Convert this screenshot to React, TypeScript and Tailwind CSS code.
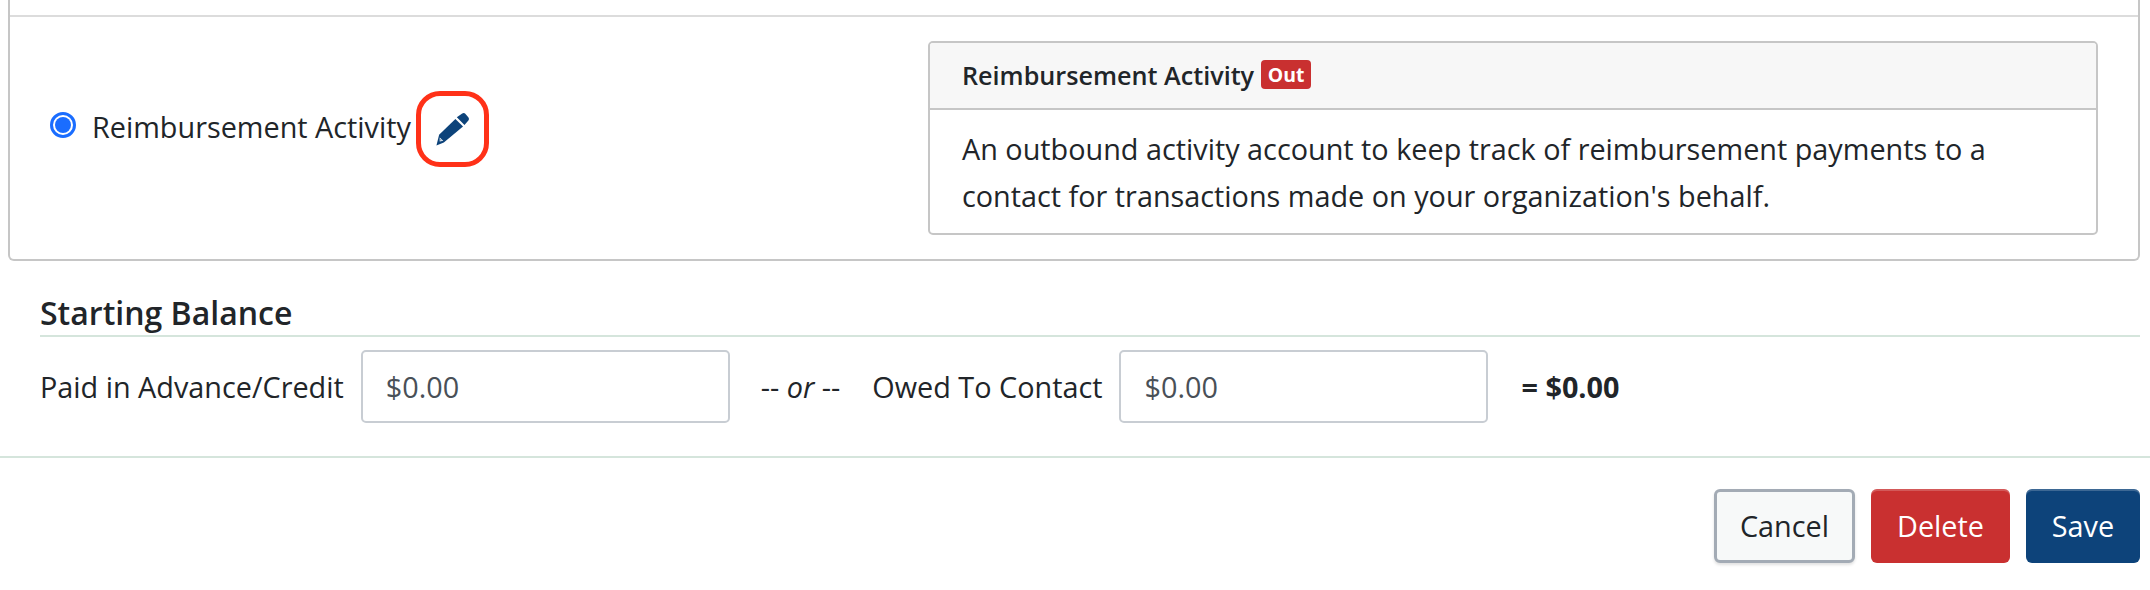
import React from "react";

function Pencil() {
  return (
    <svg viewBox="0 0 32 32" className="w-[33px] h-[34px]" fill="#0d437a">
      <path d="M20.2 4.6 L25.4 1 C26.4 0.2 27.6 0.2 28.4 1.1 L31.3 4.6 C32.2 5.7 32.1 7 31.2 8 L27.6 12.2 Z" />
      <path d="M18.8 6.2 L26.2 13.6 L7.6 29.2 L0.4 32 L3 21.6 Z" />
      <path d="M3.6 24.2 L7 27.4 L3.6 28.2 Z" fill="#ffffff" />
      <path d="M4.4 25.6 L5.6 26.8 L4.2 27.2 Z" fill="#0d437a" />
    </svg>
  );
}

function Money() {
  return (
    <div className="w-[369px] h-[73px] shrink-0 flex items-center border-2 border-[#c8cdd3] rounded-[5px] bg-white pl-[23px] text-[#495057]">
      $0.00
    </div>
  );
}

export default function App() {
  return (
    <div
      className="w-[2150px] h-[590px] bg-white overflow-hidden text-[28.8px] leading-[42px] text-[#212529]"
      style={{ fontFamily: '"Open Sans", sans-serif' }}
    >
      <div className="ml-[8px] mr-[10px] h-[261px] border-2 border-t-0 border-[#c6c6c6] rounded-b-[6px] pt-[15px]">
        <div className="border-t-2 border-[#dcdcdc] flex items-start pl-[40px] pr-[40px] pt-[24px]">
          <div className="flex items-center h-[76px] mt-[50px]">
            <div className="w-[26px] h-[26px] -mt-[8px] rounded-full border-[3px] border-[#1a6dff] flex items-center justify-center shrink-0">
              <div className="w-[16px] h-[16px] rounded-full bg-[#1a6dff]" />
            </div>
            <span className="ml-[16px] -mt-[5px] whitespace-nowrap">Reimbursement Activity</span>
            <div className="ml-[5px] w-[73px] h-[76px] border-[5px] border-[#ff3118] rounded-[24px] flex items-center justify-center shrink-0">
              <Pencil />
            </div>
          </div>
          <div className="ml-auto w-[1170px] h-[194px] border-2 border-[#c6c6c6] rounded-[5px] overflow-hidden">
            <div className="h-[67px] bg-[#f7f7f7] border-b-2 border-[#c6c6c6] pl-[32px] pb-[2px] flex items-center text-[25.2px] font-semibold gap-[7px]">
              <span>Reimbursement Activity</span>
              <span className="w-[50px] h-[29px] rounded-[4px] bg-[#c93030] text-white text-[19.4px] leading-[29px] font-bold text-center">Out</span>
            </div>
            <div className="pl-[32px] pr-[40px] pt-[16px] leading-[46.5px]">
              An outbound activity account to keep track of reimbursement payments to a contact for transactions made on your organization's behalf.
            </div>
          </div>
        </div>
      </div>

      <div className="ml-[40px] mr-[10px] mt-[32px] h-[44px] border-b-2 border-[#d5e5dc] text-[32px] leading-[40px] font-semibold">
        Starting Balance
      </div>
      <div className="flex items-center h-[73px] mt-[13px] pl-[40px]">
        <span className="whitespace-nowrap">Paid in Advance/Credit</span>
        <div className="ml-[17px]"><Money /></div>
        <span className="ml-[31px] whitespace-nowrap">-- <em>or</em> --</span>
        <span className="ml-[32px] whitespace-nowrap">Owed To Contact</span>
        <div className="ml-[17px]"><Money /></div>
        <span className="ml-[33px] font-bold whitespace-nowrap">= $0.00</span>
      </div>
      <div className="mt-[33px] border-t-2 border-[#d5e5dc] flex justify-end pt-[31px] pr-[10px] gap-[16px]">
        <button className="w-[141px] h-[74px] rounded-[6px] border-[3px] border-[#a3abb5] bg-[#f7f9f9] shadow-[0_2px_3px_rgba(0,0,0,0.12)] text-[#212529]">Cancel</button>
        <button className="w-[139px] h-[74px] rounded-[6px] bg-[#c93030] shadow-[inset_0_2px_0_rgba(255,255,255,0.2)] text-white">Delete</button>
        <button className="w-[114px] h-[74px] rounded-[6px] bg-[#0d437a] shadow-[inset_0_2px_0_rgba(255,255,255,0.2)] text-white">Save</button>
      </div>
    </div>
  );
}
